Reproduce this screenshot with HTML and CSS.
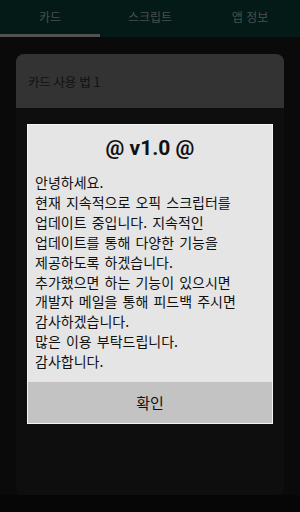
FILE: index.html
```html
<!DOCTYPE html>
<html lang="ko">
<head>
<meta charset="utf-8">
<link rel="stylesheet" href="styles.css">
</head>
<body>
<div class="app">
  <nav class="tabs">
    <div class="tab active">카드</div>
    <div class="tab">스크립트</div>
    <div class="tab">앱 정보</div>
  </nav>
  <main class="content">
    <section class="card">
      <div class="card-head">카드 사용 법 1</div>
      <div class="card-body"></div>
    </section>
  </main>
  <div class="bottom"></div>
  <div class="dialog">
    <h1 class="dialog-title">@ v1.0 @</h1>
    <div class="dialog-body">
      <p>안녕하세요.</p>
      <p>현재 지속적으로 오픽 스크립터를 업데이트 중입니다. 지속적인 업데이트를 통해 다양한 기능을 제공하도록 하겠습니다.</p>
      <p>추가했으면 하는 기능이 있으시면 개발자 메일을 통해 피드백 주시면 감사하겠습니다.</p>
      <p>많은 이용 부탁드립니다.</p>
      <p>감사합니다.</p>
    </div>
    <div class="dialog-actions">확인</div>
  </div>
</div>
</body>
</html>
```
FILE: styles.css
```css
* { box-sizing: border-box; margin: 0; padding: 0; }
html, body { width: 300px; height: 512px; overflow: hidden; }
body {
  background: #0a0a0a;
  font-family: "Noto Sans CJK KR", "Noto Sans", sans-serif;
}
.app {
  position: relative;
  width: 300px;
  height: 512px;
  display: flex;
  flex-direction: column;
}
.tabs {
  display: flex;
  height: 37px;
  background: #031a16;
}
.tab {
  flex: 1;
  text-align: center;
  color: #4a504e;
  font-size: 12px;
  line-height: 34px;
  border-bottom: 3px solid transparent;
}
.tab.active { border-bottom-color: #525252; }
.content {
  flex: 1;
  padding: 17px 16px 0;
  display: flex;
}
.card {
  flex: 1;
  display: flex;
  flex-direction: column;
  border-radius: 8px 8px 6px 6px;
  overflow: hidden;
  background: #0e0e0e;
}
.card-head {
  height: 54px;
  background: #333333;
  color: #111;
  font-size: 12.5px;
  letter-spacing: -0.3px;
  line-height: 56px;
  padding-left: 12px;
}
.card-body { flex: 1; }
.bottom {
  height: 17px;
  background: #060606;
}
.dialog {
  position: absolute;
  left: 27px;
  top: 124px;
  width: 246px;
  height: 300px;
  background: #e5e5e5;
  border: 1px solid #f3f3f3;
  display: flex;
  flex-direction: column;
}
.dialog-title {
  font-family: Roboto, "Noto Sans", sans-serif;
  font-weight: bold;
  font-size: 21px;
  text-align: center;
  color: #111;
  line-height: 24px;
  padding-top: 11px;
}
.dialog-body {
  flex: 1;
  padding: 13px 12px 0 7px;
  font-size: 14px;
  word-spacing: 1.2px;
  line-height: 19.9px;
  color: #111;
  word-break: keep-all;
}
.dialog-actions {
  height: 41px;
  background: #c3c3c3;
  text-align: center;
  font-size: 15px;
  line-height: 42px;
  color: #111;
}
```
